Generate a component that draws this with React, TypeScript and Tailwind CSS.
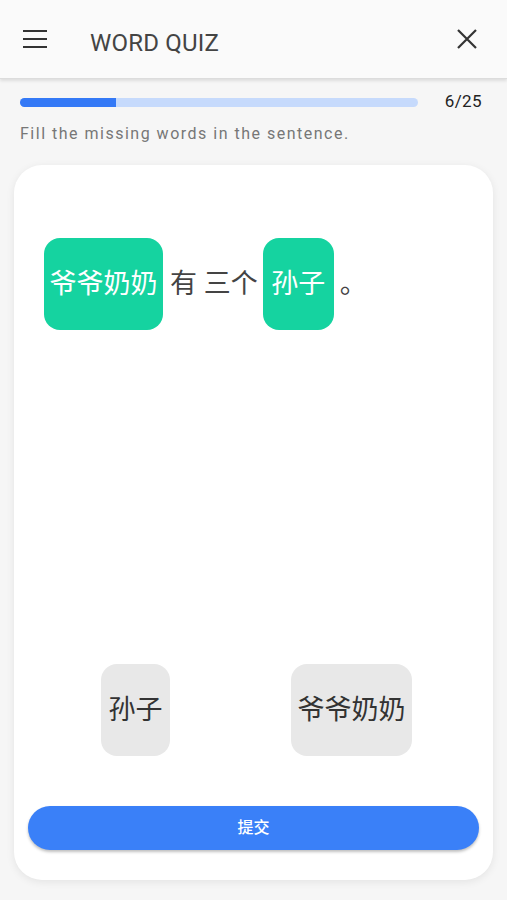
const cjk = "font-['Roboto','Noto_Sans_CJK_SC',sans-serif]"

function Chip({ label, filled, w }: { label: string; filled?: boolean; w: string }) {
  return (
    <div
      className={`${w} h-[92px] rounded-[16px] flex items-center justify-center text-[27px] ${
        filled ? 'bg-[#15d3a0] text-white' : 'bg-[#e8e8e8] text-[#333]'
      }`}
    >
      {label}
    </div>
  )
}

export default function App() {
  return (
    <div className={`w-[507px] h-[900px] bg-[#f6f6f6] flex flex-col ${cjk}`}>
      {/* Header */}
      <header className="h-[79px] shrink-0 bg-[#fafafa] flex items-center pl-[23px] pr-[30px] border-b border-[#dcdcdc] shadow-[0_2px_3px_rgba(0,0,0,0.10)]">
        <svg width="24" height="20" viewBox="0 0 24 20" className="text-[#333]">
          <path d="M0 2h24M0 10h24M0 18h24" stroke="currentColor" strokeWidth="2" />
        </svg>
        <h1 className="ml-[43px] mt-[8px] text-[24px] text-[#444] tracking-[0.2px]">WORD QUIZ</h1>
        <svg width="20" height="20" viewBox="0 0 20 20" className="ml-auto text-[#333]">
          <path d="M1 1l18 18M19 1L1 19" stroke="currentColor" strokeWidth="2.2" />
        </svg>
      </header>

      {/* Progress */}
      <div className="mt-[11px] h-[24px] flex items-center pl-[20px] pr-[25px]">
        <div className="w-[398px] h-[9px] rounded-full bg-[#c6dafc] overflow-hidden">
          <div className="h-full bg-[#3479f6]" style={{ width: `${(6 / 25) * 100}%` }} />
        </div>
        <span className="ml-auto text-[17px] text-[#222] tracking-[0.4px]">6/25</span>
      </div>
      <p className="mt-[8px] pl-[20px] text-[16px] leading-[24px] text-[#777] tracking-[1.5px]">
        Fill the missing words in the sentence.
      </p>

      {/* Card */}
      <div className="mt-[19px] mx-[14px] h-[715px] bg-white rounded-[28px] shadow-[0_2px_8px_rgba(0,0,0,0.08)] flex flex-col">
        <div className="pt-[73px] pl-[30px] flex items-center text-[27px] text-[#444]">
          <Chip label="爷爷奶奶" filled w="w-[119px]" />
          <span className="ml-[7px]">有 三个</span>
          <div className="ml-[5px]">
            <Chip label="孙子" filled w="w-[71px]" />
          </div>
          <span className="ml-[6px]">。</span>
        </div>

        <div className="mt-auto pl-[87px] flex">
          <Chip label="孙子" w="w-[69px]" />
          <div className="ml-[121px]">
            <Chip label="爷爷奶奶" w="w-[121px]" />
          </div>
        </div>

        <button className="mt-[50px] mx-[14px] mb-[30px] h-[44px] rounded-full bg-[#3a80f8] text-white text-[16px] font-medium shadow-[0_2px_3px_rgba(0,0,0,0.25)]">
          提交
        </button>
      </div>
    </div>
  )
}
